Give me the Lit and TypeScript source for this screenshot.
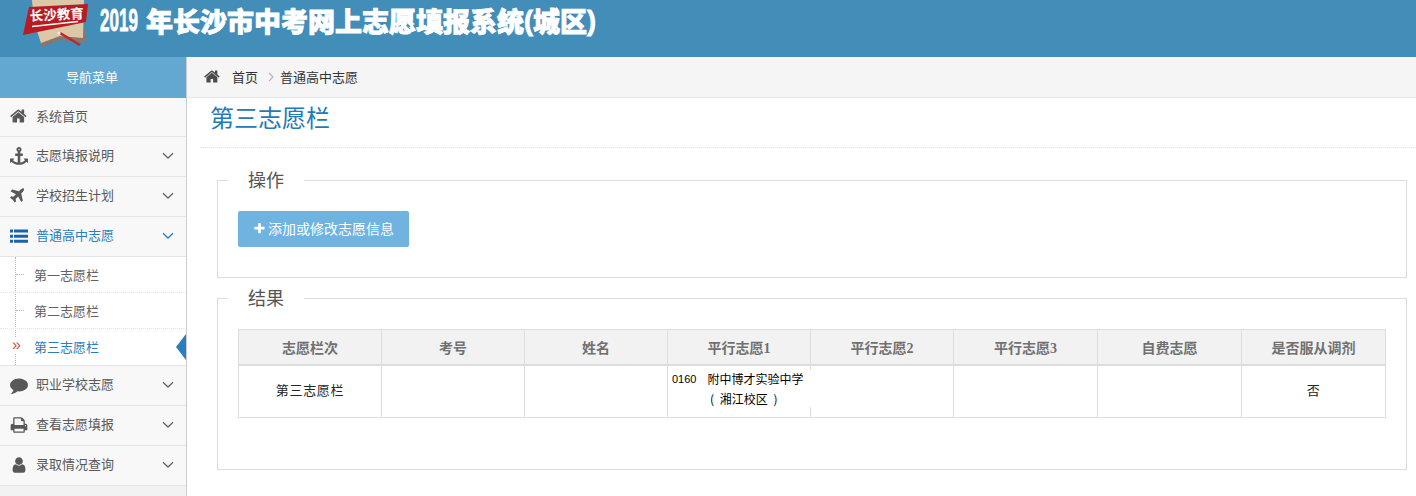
import { LitElement, html, css, svg } from "lit";
import { customElement } from "lit/decorators.js";

const FA: Record<string, string> = {
  home: "M1408 992v480q0 26-19 45t-45 19h-384v-384h-256v384h-384q-26 0-45-19t-19-45v-480q0-1 .5-3t.5-3l575-474 575 474q1 2 1 6zm223-69l-62 74q-8 9-21 11h-3q-13 0-21-7l-692-577-692 577q-12 8-24 7-13-2-21-11l-62-74q-8-10-7-23.5t11-21.5l719-599q32-26 76-26t76 26l244 204v-195q0-14 9-23t23-9h192q14 0 23 9t9 23v408l219 182q10 8 11 21.5t-7 23.5z",
  anchor: "M960 256q0-26-19-45t-45-19-45 19-19 45 19 45 45 19 45-19 19-45zm832 928v352q0 22-20 30-8 2-12 2-12 0-23-9l-93-93q-119 143-318.5 226.5t-429.5 83.5-429.5-83.5-318.5-226.5l-93 93q-9 9-23 9-4 0-12-2-20-8-20-30v-352q0-14 9-23t23-9h352q22 0 30 20 8 19-7 35l-100 100q67 91 189.5 153.5t271.5 82.5v-647h-192q-26 0-45-19t-19-45v-128q0-26 19-45t45-19h192v-163q-58-34-93-92.5t-35-128.5q0-106 75-181t181-75 181 75 75 181q0 70-35 128.5t-93 92.5v163h192q26 0 45 19t19 45v128q0 26-19 45t-45 19h-192v647q149-20 271.5-82.5t189.5-153.5l-100-100q-15-16-7-35 8-20 30-20h352q14 0 23 9t9 23z",
  plane: "M1376 160q44 52 12 148t-108 172l-161 161 160 696q5 19-12 33l-128 96q-7 6-19 6-4 0-7-1-15-3-21-16l-279-508-259 259 53 194q5 17-8 31l-96 96q-9 9-23 9h-2q-15-2-24-13l-189-252-252-189q-11-7-13-23-1-13 9-25l96-97q9-9 23-9 6 0 8 1l194 53 259-259-508-279q-14-8-17-24-2-16 9-27l128-128q14-13 30-8l665 159 160-160q76-76 172-108t148 12z",
  list: "M0 240h300v300H0zM400 240h1392v300H400zM0 760h300v300H0zM400 760h1392v300H400zM0 1280h300v300H0zM400 1280h1392v300H400z",
  comment: "M1792 896q0 174-120 321.5t-326 233-450 85.5q-70 0-145-8-198 175-460 242-49 14-114 22-17 2-30.5-9t-17.5-29v-1q-3-4-.5-12t2-10 4.5-9.5l6-9 7-8.5 8-9q7-8 31-34.5t34.5-38 31-39.5 32.5-51 27-59 26-76q-157-89-247.5-220t-90.5-281q0-130 71-248.5t191-204.5 286-136.5 348-50.5q244 0 450 85.5t326 233 120 321.5z",
  print: "M448 1536h896v-256h-896v256zm0-640h896v-384h-160q-40 0-68-28t-28-68v-160h-640v640zm1152 64q0-26-19-45t-45-19-45 19-19 45 19 45 45 19 45-19 19-45zm128 0v416q0 13-9.5 22.5t-22.5 9.5h-224v160q0 40-28 68t-68 28h-960q-40 0-68-28t-28-68v-160h-224q-13 0-22.5-9.5t-9.5-22.5v-416q0-79 56.5-135.5t135.5-56.5h64v-544q0-40 28-68t68-28h672q40 0 88 20t76 48l152 152q28 28 48 76t20 88v256h64q79 0 135.5 56.5t56.5 135.5z",
  user: "M1536 1399q0 109-62.5 187t-150.5 78h-854q-88 0-150.5-78t-62.5-187q0-85 8.5-160.5t31.5-152 58.5-131 94-89 134.5-34.5q131 128 313 128t313-128q76 0 134.5 34.5t94 89 58.5 131 31.5 152 8.5 160.5zm-256-887q0 159-112.5 271.5t-271.5 112.5-271.5-112.5-112.5-271.5 112.5-271.5 271.5-112.5 271.5 112.5 112.5 271.5z",
  plus: "M1600 736v192q0 40-28 68t-68 28h-416v416q0 40-28 68t-68 28h-192q-40 0-68-28t-28-68v-416h-416q-40 0-68-28t-28-68v-192q0-40 28-68t68-28h416v-416q0-40 28-68t68-28h192q40 0 68 28t28 68v416h416q40 0 68 28t28 68z",
};

const icon = (name: string, cls = "") =>
  html`<svg class="ic ${cls}" viewBox="0 0 1792 1792" aria-hidden="true"><path d=${FA[name]} fill="currentColor"></path></svg>`;

const chevron = html`<svg class="chev" viewBox="0 0 12 8" aria-hidden="true"><polyline points="1,1.2 6,6 11,1.2" fill="none" stroke="currentColor" stroke-width="1.3"></polyline></svg>`;

const logo = svg`
  <path d="M38 26 L84 26 L86 43 L60 40 L42 47 Z" fill="#8b7769"></path>
  <path d="M32 0 L84 0 L83 38 L60 36 L41 43 L34 22 Z" fill="#dcc7a6"></path>
  <path d="M29 7 L88 4 L86 22 L23 35 Z" fill="#b81c22"></path>
  <text x="30" y="21" class="logotext" transform="rotate(-3 30 21)">长沙教育</text>
  <line x1="32" y1="26.5" x2="78" y2="21.5" stroke="#fff" stroke-width="1.4"></line>
  <line x1="60" y1="33" x2="80" y2="45" stroke="#c0272d" stroke-width="2.6"></line>
  <circle cx="59" cy="33" r="1.6" fill="#eee"></circle>
`;

@customElement("app-root")
export class AppRoot extends LitElement {
  static styles = css`
    :host {
      display: block;
      width: 1416px;
      height: 496px;
      overflow: hidden;
      background: #fff;
      font-family: "Noto Sans CJK SC", "Liberation Sans", sans-serif;
      color: #393939;
      font-size: 13px;
    }
    .ic { width: 18px; height: 18px; display: block; flex: none; }
    .top {
      height: 57px;
      background: #438eb9;
      display: flex;
      align-items: flex-start;
      overflow: hidden;
    }
    .logo { width: 100px; height: 57px; flex: none; display: block; }
    .logotext { font: 700 13.5px "Noto Sans CJK SC", sans-serif; fill: #fff; }
    .brand {
      color: #fff;
      font-size: 27px;
      line-height: 42px;
      font-weight: 900;
      white-space: nowrap;
      display: flex;
      -webkit-text-stroke: 0.8px #fff;
    }
    .year {
      font-family: "Liberation Sans", sans-serif;
      font-weight: 700;
      font-size: 31px;
      display: block;
      width: 46px;
      transform: scaleX(0.55);
      transform-origin: left center;
    }
    .paren { font-family: "Liberation Sans", sans-serif; }
    .body { display: flex; height: 439px; }
    .side {
      width: 187px;
      flex: none;
      box-sizing: border-box;
      background: #f2f2f2;
      border-right: 1px solid #ccc;
    }
    .side-head {
      height: 41px;
      background: #62a8d1;
      color: #fff;
      text-align: center;
      line-height: 40px;
      text-indent: -2px;
    }
    .item {
      height: 40px;
      box-sizing: border-box;
      background: #f8f8f8;
      border-bottom: 1px solid #e5e5e5;
      color: #585858;
      display: flex;
      align-items: center;
      padding: 0 11px 2px 10px;
    }
    .item.first { height: 39px; }
    .item .ic { width: 18px; height: 18px; margin-right: 8px; color: #585858; }
    .item .label { flex: 1; margin-top: -2px; }
    .chev { width: 12px; height: 8px; color: #666; margin-right: 1px; }
    .item.open { color: #2b7dbc; }
    .item.open .ic { color: #1963aa; }
    .item.open .chev { color: #2b7dbc; }
    .sub {
      background: #fff;
      border-bottom: 1px solid #e5e5e5;
      position: relative;
    }
    .sub::before {
      content: "";
      position: absolute;
      left: 15px;
      top: 0;
      bottom: 0;
      border-left: 1px dotted #9dbdd6;
    }
    .subitem {
      height: 36px;
      box-sizing: border-box;
      padding-left: 34px;
      padding-bottom: 1px;
      display: flex;
      align-items: center;
      position: relative;
      border-bottom: 1px dotted #e4e4e4;
      color: #616161;
    }
    .subitem:last-child { border-bottom: 0; }
    .subitem::before {
      content: "";
      position: absolute;
      left: 16px;
      top: 17px;
      width: 8px;
      border-top: 1px dotted #9dbdd6;
    }
    .subitem.active { color: #2b7dbc; }
    .subitem.active::before { display: none; }
    .dbl {
      position: absolute;
      left: 12px;
      top: 8px;
      color: #c8574a;
      font: 16px/16px "Liberation Sans", sans-serif;
      background: #fff;
    }
    .caret {
      position: absolute;
      right: 0;
      top: 5px;
      width: 0;
      height: 0;
      border: solid transparent;
      border-width: 13px 10px 13px 0;
      border-right-color: #2b7dbc;
    }
    .main { flex: 1; min-width: 0; }
    .crumbs {
      height: 41px;
      box-sizing: border-box;
      background: #f5f5f5;
      border-bottom: 1px solid #e5e5e5;
      display: flex;
      align-items: center;
      padding-left: 17px;
      padding-bottom: 2px;
      color: #333;
    }
    .crumbs .ic { width: 17px; height: 17px; margin-right: 11px; color: #4c4c4c; }
    .sep { width: 6px; height: 10px; margin: 2px 6px 0 10px; color: #b2b6bf; }
    .content { padding-left: 13px; }
    .page-title {
      height: 50px;
      box-sizing: border-box;
      padding-left: 10px;
      border-bottom: 1px dotted #e2e2e2;
      color: #2679b5;
      font-size: 24px;
      line-height: 37px;
    }
    fieldset {
      display: block;
      box-sizing: border-box;
      margin: 0 9px 0 17px;
      padding: 0 20px;
      border: 1px solid #ddd;
      min-width: 0;
    }
    legend {
      padding: 0 20px;
      margin-left: -10px;
      font-size: 18px;
      line-height: 22px;
      height: 24px;
      color: #555;
    }
    .fs1 { margin-top: 20px; height: 110px; padding-top: 19px; }
    .fs2 { margin-top: 8px; height: 184px; padding-top: 19px; }
    .btn {
      width: 171px;
      height: 36px;
      box-sizing: border-box;
      background: #6fb3e0;
      color: #fff;
      border-radius: 2px;
      font-size: 14px;
      display: flex;
      align-items: center;
      justify-content: center;
      gap: 2px;
      padding-bottom: 2px;
    }
    .btn .ic { width: 13px; height: 13px; }
    table {
      width: 1147px;
      border-collapse: collapse;
      table-layout: fixed;
    }
    th, td {
      border: 1px solid #ddd;
      text-align: center;
      padding: 0;
    }
    th {
      height: 34px;
      background: #f2f2f2;
      color: #707070;
      font-family: "Liberation Serif", "Noto Sans CJK SC", serif;
      font-size: 14px;
      font-weight: 700;
      border-bottom: 2px solid #ddd;
    }
    td {
      height: 52px;
      padding-bottom: 3px;
      box-sizing: border-box;
      font-size: 13px;
      letter-spacing: 0.7px;
      color: #222;
    }
    td.pick { position: relative; text-align: left; }
    .pickbox {
      position: absolute;
      left: 0;
      right: -1px;
      top: 4px;
      height: 37px;
      background: #fff;
      font-size: 12px;
      letter-spacing: 0;
      line-height: 20px;
      color: #000;
    }
    .l1 { display: flex; padding-left: 4px; gap: 11px; margin-top: -1px; }
    .num { font-family: "Liberation Sans", sans-serif; font-size: 11px; }
    .l2 { display: block; padding-left: 42px; word-spacing: 3px; }
  `;

  render() {
    const cols = [143, 143, 143, 143, 143, 144, 144, 144];
    const heads = ["志愿栏次", "考号", "姓名", "平行志愿1", "平行志愿2", "平行志愿3", "自费志愿", "是否服从调剂"];
    const after = [
      ["comment", "职业学校志愿"],
      ["print", "查看志愿填报"],
      ["user", "录取情况查询"],
    ];
    const before = [
      ["anchor", "志愿填报说明"],
      ["plane", "学校招生计划"],
    ];
    return html`
      <div class="top">
        <svg class="logo" viewBox="0 0 100 57" aria-hidden="true">${logo}</svg>
        <div class="brand"><span class="year">2019</span><span>年长沙市中考网上志愿填报系统</span><span class="paren">(</span><span>城区</span><span class="paren">)</span></div>
      </div>
      <div class="body">
        <nav class="side">
          <div class="side-head">导航菜单</div>
          <div class="item first">${icon("home")}<span class="label">系统首页</span></div>
          ${before.map(([i, t]) => html`<div class="item">${icon(i)}<span class="label">${t}</span>${chevron}</div>`)}
          <div class="item open">${icon("list")}<span class="label">普通高中志愿</span>${chevron}</div>
          <div class="sub">
            <div class="subitem">第一志愿栏</div>
            <div class="subitem">第二志愿栏</div>
            <div class="subitem active"><span class="dbl">»</span>第三志愿栏<span class="caret"></span></div>
          </div>
          ${after.map(([i, t]) => html`<div class="item">${icon(i)}<span class="label">${t}</span>${chevron}</div>`)}
        </nav>
        <main class="main">
          <div class="crumbs">
            ${icon("home")}<span>首页</span>
            <svg class="sep" viewBox="0 0 6 10" aria-hidden="true"><polyline points="1,1 5,5 1,9" fill="none" stroke="currentColor" stroke-width="1.2"></polyline></svg>
            <span>普通高中志愿</span>
          </div>
          <div class="content">
            <div class="page-title">第三志愿栏</div>
            <fieldset class="fs1">
              <legend>操作</legend>
              <div class="btn">${icon("plus")}<span>添加或修改志愿信息</span></div>
            </fieldset>
            <fieldset class="fs2">
              <legend>结果</legend>
              <table>
                <colgroup>${cols.map((w) => html`<col style="width:${w}px" />`)}</colgroup>
                <thead><tr>${heads.map((h) => html`<th>${h}</th>`)}</tr></thead>
                <tbody>
                  <tr>
                    <td>第三志愿栏</td>
                    <td></td>
                    <td></td>
                    <td class="pick"><div class="pickbox"><span class="l1"><span class="num">0160</span><span>附中博才实验中学</span></span><span class="l2">( 湘江校区 )</span></div></td>
                    <td></td>
                    <td></td>
                    <td></td>
                    <td>否</td>
                  </tr>
                </tbody>
              </table>
            </fieldset>
          </div>
        </main>
      </div>
    `;
  }
}
